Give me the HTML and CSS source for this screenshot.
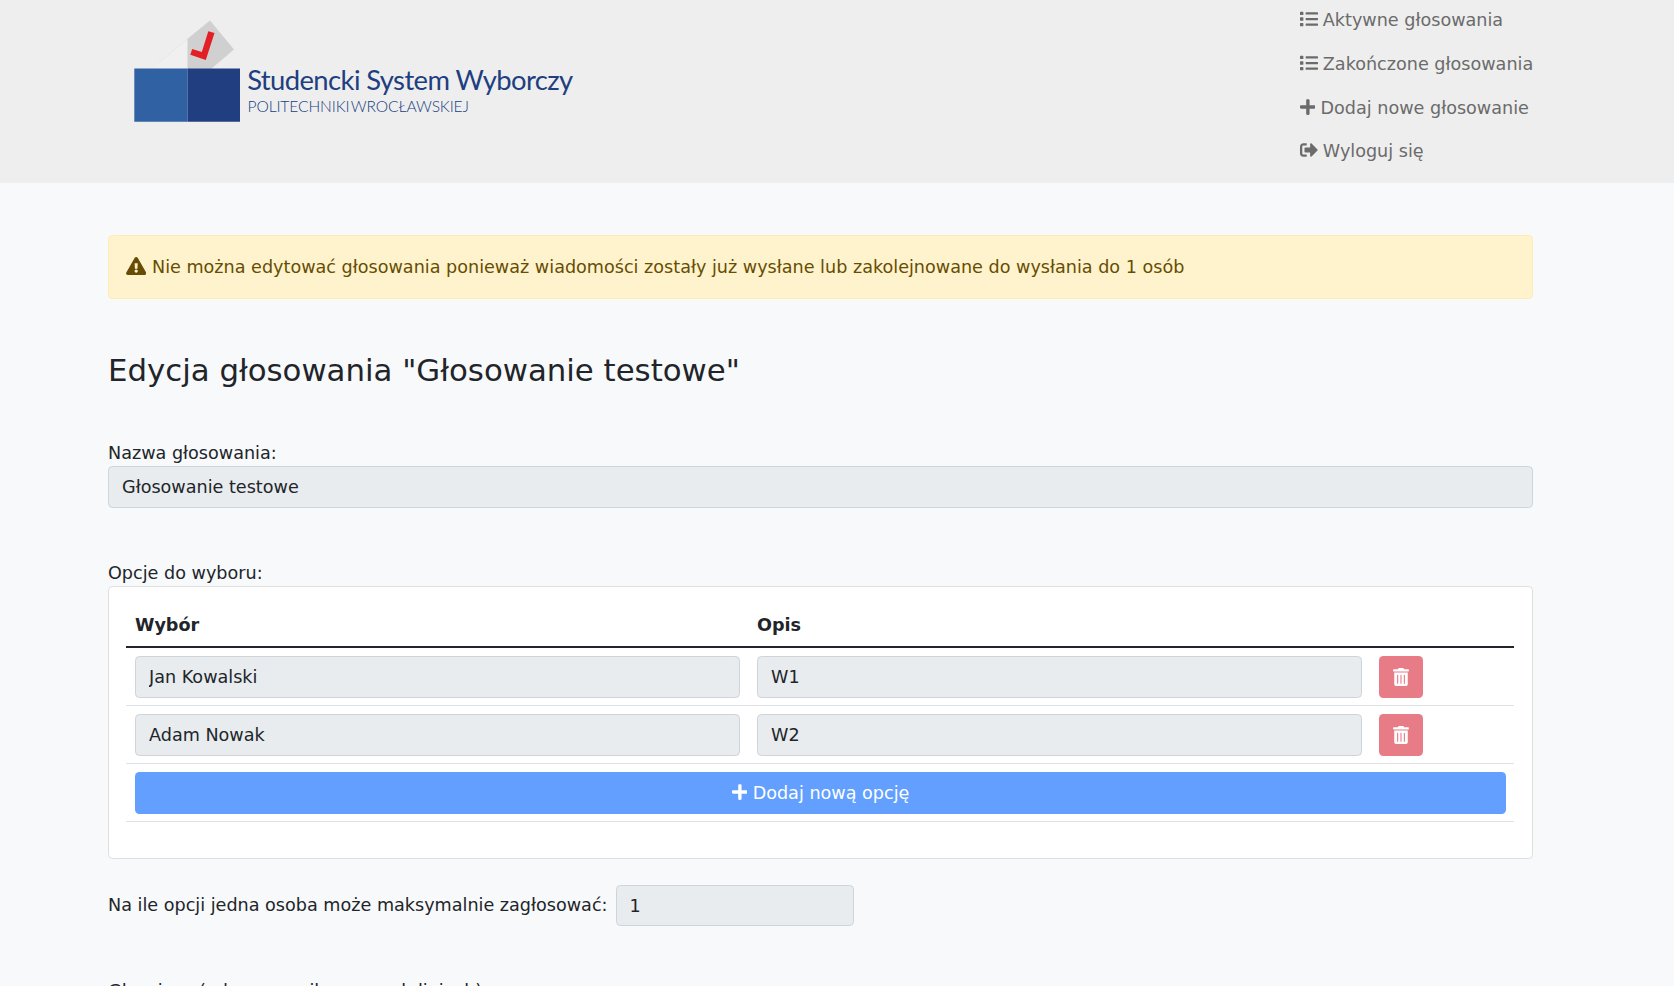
FILE: index.html
```html
<!DOCTYPE html>
<html lang="pl">
<head>
<meta charset="utf-8">
<title>Studencki System Wyborczy</title>
<link rel="stylesheet" href="styles.css">
</head>
<body>
<svg class="sprite" aria-hidden="true">
  <symbol id="list" viewBox="0 0 512 512"><path d="M80 368H16a16 16 0 0 0-16 16v64a16 16 0 0 0 16 16h64a16 16 0 0 0 16-16v-64a16 16 0 0 0-16-16zm0-320H16A16 16 0 0 0 0 64v64a16 16 0 0 0 16 16h64a16 16 0 0 0 16-16V64a16 16 0 0 0-16-16zm0 160H16a16 16 0 0 0-16 16v64a16 16 0 0 0 16 16h64a16 16 0 0 0 16-16v-64a16 16 0 0 0-16-16zm416 176H176a16 16 0 0 0-16 16v32a16 16 0 0 0 16 16h320a16 16 0 0 0 16-16v-32a16 16 0 0 0-16-16zm0-320H176a16 16 0 0 0-16 16v32a16 16 0 0 0 16 16h320a16 16 0 0 0 16-16V80a16 16 0 0 0-16-16zm0 160H176a16 16 0 0 0-16 16v32a16 16 0 0 0 16 16h320a16 16 0 0 0 16-16v-32a16 16 0 0 0-16-16z"/></symbol>
  <symbol id="plus" viewBox="0 0 448 512"><path d="M416 208H272V64c0-17.67-14.33-32-32-32h-32c-17.67 0-32 14.33-32 32v144H32c-17.67 0-32 14.33-32 32v32c0 17.67 14.33 32 32 32h144v144c0 17.67 14.33 32 32 32h32c17.67 0 32-14.33 32-32V304h144c17.67 0 32-14.33 32-32v-32c0-17.67-14.33-32-32-32z"/></symbol>
  <symbol id="logout" viewBox="0 0 512 512"><path d="M497 273L329 441c-15 15-41 4.500-41-17v-96H152c-13.300 0-24-10.700-24-24v-96c0-13.300 10.700-24 24-24h136V88c0-21.400 25.900-32 41-17l168 168c9.300 9.400 9.300 24.600 0 34zM192 436v-40c0-6.600-5.400-12-12-12H96c-17.700 0-32-14.300-32-32V160c0-17.700 14.300-32 32-32h84c6.600 0 12-5.400 12-12V76c0-6.600-5.400-12-12-12H96c-53 0-96 43-96 96v192c0 53 43 96 96 96h84c6.600 0 12-5.400 12-12z"/></symbol>
  <symbol id="warning" viewBox="0 0 576 512"><path d="M569.517 440.013C587.975 472.007 564.806 512 527.940 512H48.054c-36.937 0-59.999-40.055-41.577-71.987L246.423 23.985c18.467-32.009 64.720-31.951 83.154 0l239.940 416.028zM288 354c-25.405 0-46 20.595-46 46s20.595 46 46 46 46-20.595 46-46-20.595-46-46-46zm-43.673-165.346l7.418 136c.347 6.364 5.609 11.346 11.982 11.346h48.546c6.373 0 11.635-4.982 11.982-11.346l7.418-136c.375-6.874-5.098-12.654-11.982-12.654h-63.383c-6.884 0-12.356 5.780-11.981 12.654z"/></symbol>
  <symbol id="trash" viewBox="0 0 448 512"><path d="M32 464a48 48 0 0 0 48 48h288a48 48 0 0 0 48-48V128H32zm272-256a16 16 0 0 1 32 0v224a16 16 0 0 1-32 0zm-96 0a16 16 0 0 1 32 0v224a16 16 0 0 1-32 0zm-96 0a16 16 0 0 1 32 0v224a16 16 0 0 1-32 0zM432 32H312l-9.400-18.700A24 24 0 0 0 281.100 0H166.800a23.720 23.720 0 0 0-21.400 13.300L136 32H16A16 16 0 0 0 0 48v32a16 16 0 0 0 16 16h416a16 16 0 0 0 16-16V48a16 16 0 0 0-16-16z"/></symbol>
</svg>

<header class="topbar">
  <svg class="logo" width="460" height="120" viewBox="124 10 460 120" role="img" aria-label="Studencki System Wyborczy">
    <path class="logo-fold" d="M187.500 38.500 156 64.500 160 69h27.500z"/>
    <path class="logo-edge" d="M187.500 39 157 64"/>
    <path class="logo-ballot" d="M187.500 38.700 210 20.500 234 49.500 211 69h-23.500z"/>
    <path class="logo-check" d="m192.200 49-1.900 5.700 15.500 5.300 8.700-27-6.200-1.700-6.500 20.700z"/>
    <path class="logo-left" d="M134.300 68.500h53.200v53.200h-53.200z"/>
    <path class="logo-right" d="M187.500 68.500H240v53.200h-52.500z"/>
    <text class="logo-title" x="247.200" y="89.700" textLength="326">Studencki System Wyborczy</text>
    <text class="logo-sub" x="247.500" y="112" textLength="221.500">POLITECHNIKI WROCŁAWSKIEJ</text>
  </svg>
  <nav class="menu">
    <a class="menu-item"><svg class="icon"><use href="#list"/></svg> Aktywne głosowania</a>
    <a class="menu-item"><svg class="icon"><use href="#list"/></svg> Zakończone głosowania</a>
    <a class="menu-item"><svg class="icon icon-narrow"><use href="#plus"/></svg> Dodaj nowe głosowanie</a>
    <a class="menu-item"><svg class="icon"><use href="#logout"/></svg> Wyloguj się</a>
  </nav>
</header>

<main class="content">
  <div class="alert"><svg class="icon icon-wide"><use href="#warning"/></svg> Nie można edytować głosowania ponieważ wiadomości zostały już wysłane lub zakolejnowane do wysłania do 1 osób</div>
  <h3 class="title">Edycja głosowania "Głosowanie testowe"</h3>

  <label class="label" for="name">Nazwa głosowania:</label>
  <input class="field name-field" id="name" value="Głosowanie testowe" readonly>

  <div class="label">Opcje do wyboru:</div>
  <section class="card">
    <div class="row row-head"><span>Wybór</span><span>Opis</span></div>
    <div class="row"><input class="field" value="Jan Kowalski" readonly><input class="field" value="W1" readonly><button class="btn btn-delete" aria-label="Usuń"><svg class="icon"><use href="#trash"/></svg></button></div>
    <div class="row"><input class="field" value="Adam Nowak" readonly><input class="field" value="W2" readonly><button class="btn btn-delete" aria-label="Usuń"><svg class="icon"><use href="#trash"/></svg></button></div>
    <div class="row row-add"><button class="btn btn-add"><svg class="icon icon-narrow"><use href="#plus"/></svg> Dodaj nową opcję</button></div>
  </section>

  <div class="limit"><label for="limit">Na ile opcji jedna osoba może maksymalnie zagłosować:</label><input class="field limit-field" id="limit" value="1" readonly></div>
  <div class="label">Głosujący (adresy email w nowych liniach)</div>
</main>
</body>
</html>
```
FILE: styles.css
```css
* { box-sizing: border-box; }

html, body { height: 100%; }

body {
  margin: 0;
  overflow: hidden;
  background: #f8f9fb;
  color: #212529;
  font: 17.6px/26.4px "DejaVu Sans", sans-serif;
}

.sprite { display: none; }

.icon { width: 18px; height: 18px; margin-right: -.3px; fill: currentColor; vertical-align: -2.2px; }
.icon-narrow { width: 15.750px; }
.icon-wide { width: 20.4px; margin: 0 0 0 -.6px; }

.topbar {
  display: flex;
  justify-content: space-between;
  height: 183px;
  padding: 0 141px 0 124px;
  background: #eee;
}

.logo { margin-top: 10px; }
.logo-fold { fill: #f0f0f0; }
.logo-edge { stroke: #e4e4e4; stroke-width: .7; }
.logo-ballot { fill: #d0d0d0; }
.logo-check { fill: #e31e24; }
.logo-left { fill: #3061a3; }
.logo-right { fill: #203e80; }
.logo-title { fill: #203e80; font: 27.4px Lato, sans-serif; }
.logo-sub { fill: #203e80; font: 300 15.6px Lato, sans-serif; word-spacing: -2.5px; }

.menu { width: 233.500px; padding-top: 7px; color: #6b6b6b; white-space: nowrap; }
.menu-item { display: block; height: 44px; }
.menu-item:last-child { margin-top: -1px; }

.content { width: 1425px; margin: 52px 0 0 108px; }

.alert {
  height: 64px;
  padding: 17.6px;
  border: 1px solid #ffecb5;
  border-radius: 4.4px;
  background: #fff3cd;
  color: #664d03;
}

.title { margin: 53px 0 50px; font-size: 30.8px; font-weight: 500; line-height: 37px; }

.label { display: block; height: 27px; padding-top: 1px; }

.field {
  display: block;
  width: 100%;
  height: 42px;
  padding: 0 13px;
  border: 1px solid #ced4da;
  border-radius: 4.4px;
  background: #e8ecef;
  color: #212529;
  font: inherit;
}
.name-field { margin-bottom: 51px; }

.card {
  height: 273px;
  padding: 17px 18px 17px 17px;
  border: 1px solid #dfdfdf;
  border-radius: 4.4px;
  background: #fff;
}

.row {
  display: grid;
  grid-template-columns: 605px 605px 44px;
  column-gap: 17px;
  height: 58px;
  padding: 8px 8px 0 9px;
  border-bottom: 1px solid #dee2e6;
}
.row-head { height: 44px; border-bottom: 2px solid #212529; font-weight: 700; }
.row-add { grid-template-columns: 1fr; }

.btn {
  height: 42px;
  padding: 0;
  border: 0;
  border-radius: 4.4px;
  color: #fff;
  font: inherit;
}
.btn-delete { display: flex; align-items: center; justify-content: center; background: #e77c87; }
.btn-delete .icon { width: 16px; margin: 0; }
.btn-add { background: #629ffe; }

.limit { display: flex; align-items: center; gap: 8px; margin: 26px 0 51px; }
.limit-field { width: 238px; height: 41px; }
```
